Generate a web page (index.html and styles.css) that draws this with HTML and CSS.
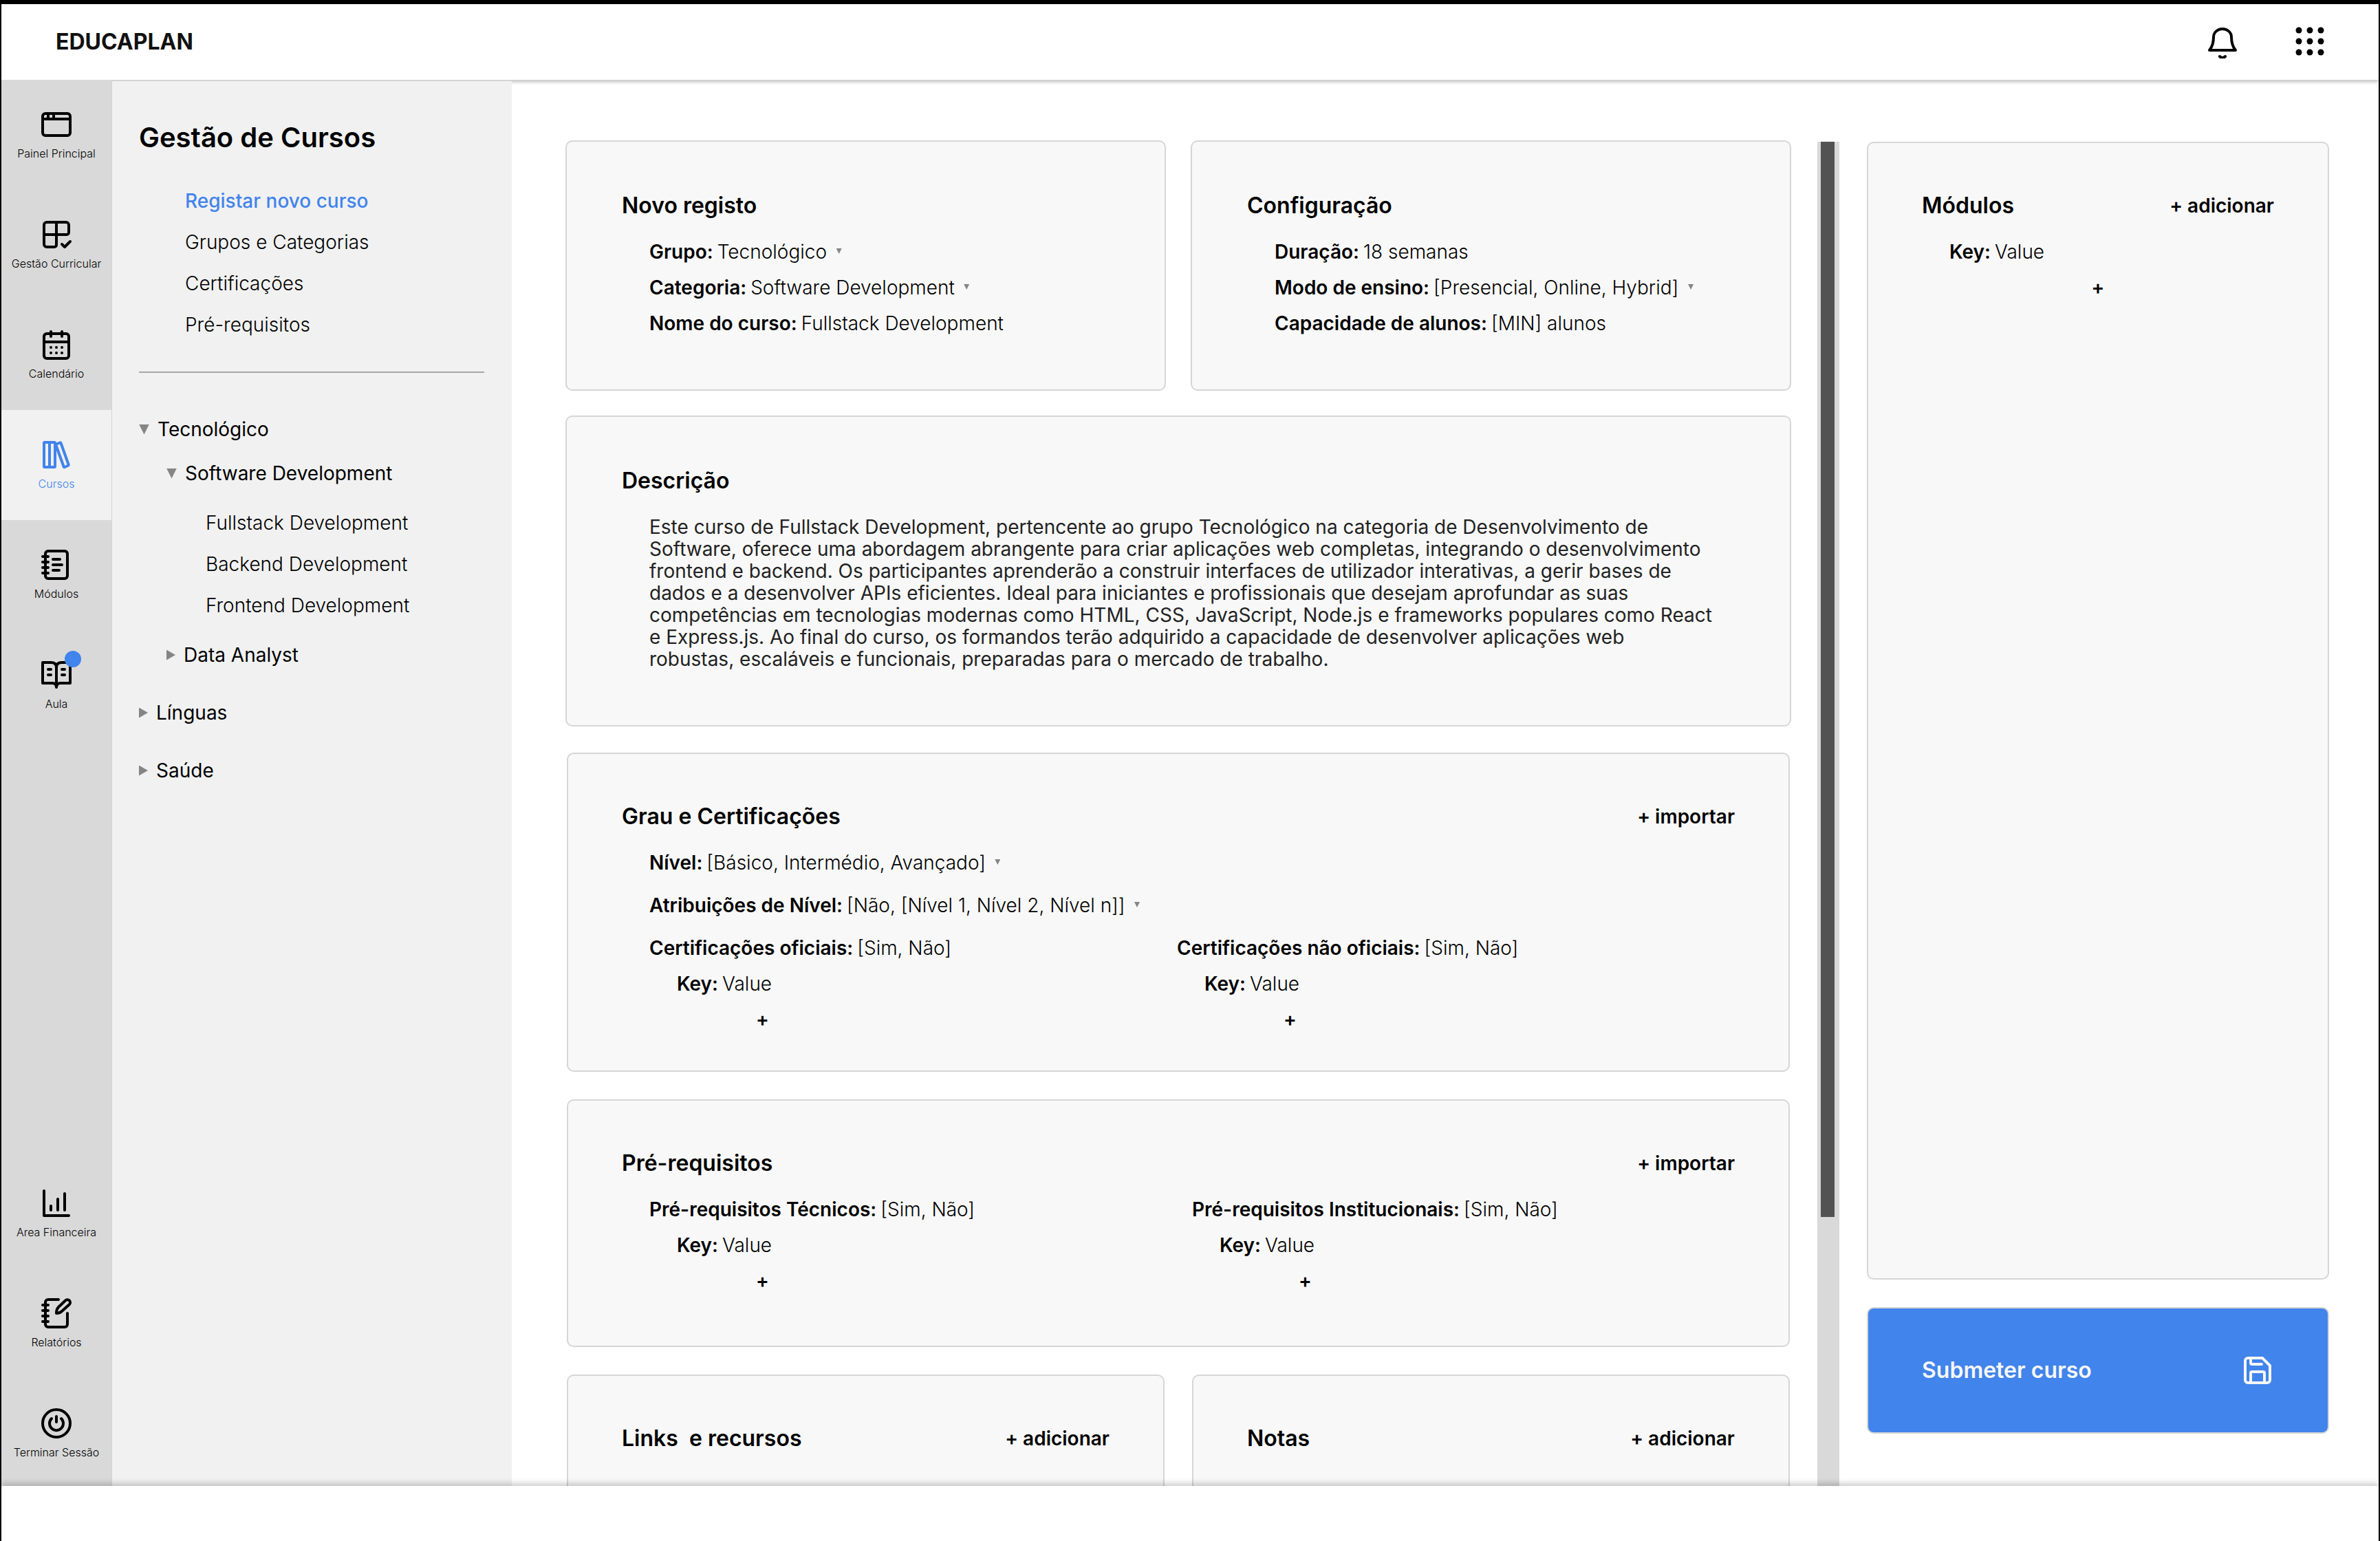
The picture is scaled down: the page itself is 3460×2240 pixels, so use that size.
FILE: index.html
```html
<!DOCTYPE html>
<html lang="pt">
<head>
<meta charset="utf-8">
<title>EDUCAPLAN – Gestão de Cursos</title>
<link rel="stylesheet" href="styles.css">
</head>
<body>
<header class="topbar">
  <h1 class="brand">EDUCAPLAN</h1>
  <div class="topbar-actions">
    <button class="icon-button" type="button" aria-label="Notificações">
      <svg class="icon" viewBox="-1 -2 48 48"><path d="M5 34C10 28 11 22 11 15C11 8 17 3 24 3S37 8 37 15C37 22 38 28 43 34Z"/><path d="M20 43q4 4 8 0"/></svg>
    </button>
    <button class="icon-button" type="button" aria-label="Aplicações">
      <svg class="icon icon-solid" viewBox="0 1 48 48"><circle cx="8" cy="8" r="4.5"/><circle cx="24" cy="8" r="4.5"/><circle cx="40" cy="8" r="4.5"/><circle cx="8" cy="24" r="4.5"/><circle cx="24" cy="24" r="4.5"/><circle cx="40" cy="24" r="4.5"/><circle cx="8" cy="40" r="4.5"/><circle cx="24" cy="40" r="4.5"/><circle cx="40" cy="40" r="4.5"/></svg>
    </button>
  </div>
</header>

<div class="workspace">
  <nav class="rail" aria-label="Principal">
    <div class="rail-group">
      <a class="rail-item" href="#">
        <svg class="icon" viewBox="0 0 48 48"><rect x="4" y="8" width="40" height="32" rx="4"/><path d="M4 16H44M12 8v8M20 8v8"/></svg>
        <span>Painel Principal</span>
      </a>
      <a class="rail-item" href="#">
        <svg class="icon" viewBox="0 0 48 48"><path d="M24 6V39a3 3 0 0 1-3 3H10a4 4 0 0 1-4-4V10a4 4 0 0 1 4-4H38a4 4 0 0 1 4 4V21a3 3 0 0 1-3 3H6"/><path d="M32 38l4 4 8-8"/></svg>
        <span>Gestão Curricular</span>
      </a>
      <a class="rail-item" href="#">
        <svg class="icon" viewBox="0 0 48 48"><rect x="6" y="8" width="36" height="36" rx="4"/><path d="M16 5v7M32 5v7M6 20H42M16 28h0M24 28h0M32 28h0M16 36h0M24 36h0M32 36h0"/></svg>
        <span>Calendário</span>
      </a>
      <a class="rail-item active" href="#" aria-current="page">
        <svg class="icon" viewBox="0 0 48 48"><rect x="6" y="6" width="8" height="36" rx="1"/><rect x="14" y="6" width="8" height="36" rx="1"/><path d="M23 9L29 6.500Q30 6 30.500 7L41.500 38Q42 39.500 40.500 40L36 42Q35 42.500 34.500 41Z"/></svg>
        <span>Cursos</span>
      </a>
      <a class="rail-item" href="#">
        <svg class="icon" viewBox="0 0 48 48"><rect x="8" y="4" width="32" height="40" rx="4"/><path d="M4 12h8M4 20h8M4 28h8M4 36h8M19 16H29M19 24H32M19 32H28"/></svg>
        <span>Módulos</span>
      </a>
      <a class="rail-item" href="#">
        <span class="icon-wrap">
          <svg class="icon" viewBox="0 0 48 48"><path d="M24 13C24 8 21 6 16 6H4V36H18C22 36 24 38 24 42C24 38 26 36 30 36H44V6H32C27 6 24 8 24 13V42M12 16h4M12 24h4M32 16h4M32 24h4"/></svg>
          <span class="badge"></span>
        </span>
        <span>Aula</span>
      </a>
    </div>
    <div class="rail-group rail-bottom">
      <a class="rail-item" href="#">
        <svg class="icon" viewBox="0 0 48 48"><path d="M6 6V42H42M16 28v6M26 18v16M36 10v24"/></svg>
        <span>Area Financeira</span>
      </a>
      <a class="rail-item" href="#">
        <svg class="icon" viewBox="0 0 48 48"><path d="M27 4H12a4 4 0 0 0-4 4V40a4 4 0 0 0 4 4H36a4 4 0 0 0 4-4V24M4 12h8M4 20h8M4 28h8M4 36h8"/><path d="M24 24C24 20 25 17 27 15L37 5.500A4 4 0 0 1 43 11L33 20C30 23 28 24 24 24Z"/></svg>
        <span>Relatórios</span>
      </a>
      <a class="rail-item" href="#">
        <svg class="icon" viewBox="0 0 48 48"><circle cx="24" cy="24" r="20"/><path d="M24 14v8M17 17a10 10 0 1 0 14 0"/></svg>
        <span>Terminar Sessão</span>
      </a>
    </div>
  </nav>

  <aside class="side">
    <h2 class="side-title">Gestão de Cursos</h2>
    <ul class="side-links">
      <li><a class="current" href="#">Registar novo curso</a></li>
      <li><a href="#">Grupos e Categorias</a></li>
      <li><a href="#">Certificações</a></li>
      <li><a href="#">Pré-requisitos</a></li>
    </ul>
    <hr class="side-rule">
    <div class="tree">
      <details open>
        <summary>Tecnológico</summary>
        <div class="branch">
          <details open>
            <summary>Software Development</summary>
            <ul class="leaves">
              <li><a href="#">Fullstack Development</a></li>
              <li><a href="#">Backend Development</a></li>
              <li><a href="#">Frontend Development</a></li>
            </ul>
          </details>
          <details>
            <summary>Data Analyst</summary>
          </details>
        </div>
      </details>
      <details>
        <summary>Línguas</summary>
      </details>
      <details>
        <summary>Saúde</summary>
      </details>
    </div>
  </aside>

  <main class="content">
    <div class="cards">
      <div class="stack">
        <div class="pair">
          <section class="card">
            <h3>Novo registo</h3>
            <div class="fields">
              <div class="field"><label for="grupo">Grupo:</label><span class="picker"><select id="grupo"><option>Tecnológico</option></select></span></div>
              <div class="field"><label for="categoria">Categoria:</label><span class="picker"><select id="categoria"><option>Software Development</option></select></span></div>
              <div class="field"><b>Nome do curso:</b><span>Fullstack Development</span></div>
            </div>
          </section>
          <section class="card">
            <h3>Configuração</h3>
            <div class="fields">
              <div class="field"><b>Duração:</b><span>18 semanas</span></div>
              <div class="field"><label for="modo">Modo de ensino:</label><span class="picker"><select id="modo"><option>[Presencial, Online, Hybrid]</option></select></span></div>
              <div class="field"><b>Capacidade de alunos:</b><span>[MIN] alunos</span></div>
            </div>
          </section>
        </div>
        <section class="card">
          <h3>Descrição</h3>
          <p class="description">Este curso de Fullstack Development, pertencente ao grupo Tecnológico na categoria de Desenvolvimento de Software, oferece uma abordagem abrangente para criar aplicações web completas, integrando o desenvolvimento frontend e backend. Os participantes aprenderão a construir interfaces de utilizador interativas, a gerir bases de dados e a desenvolver APIs eficientes. Ideal para iniciantes e profissionais que desejam aprofundar as suas competências em tecnologias modernas como HTML, CSS, JavaScript, Node.js e frameworks populares como React e Express.js. Ao final do curso, os formandos terão adquirido a capacidade de desenvolver aplicações web <br>robustas, escaláveis e funcionais, preparadas para o mercado de trabalho.</p>
        </section>
      </div>

      <div class="stack stack-inset">
        <section class="card card-short">
          <div class="card-head"><h3>Grau e Certificações</h3><button class="link-button" type="button">+ importar</button></div>
          <div class="fields fields-loose">
            <div class="field"><label for="nivel">Nível:</label><span class="picker"><select id="nivel"><option>[Básico, Intermédio, Avançado]</option></select></span></div>
            <div class="field"><label for="atrib">Atribuições de Nível:</label><span class="picker"><select id="atrib"><option>[Não, [Nível 1, Nível 2, Nível n]]</option></select></span></div>
            <div class="columns columns-inset">
              <div>
                <div class="field"><b>Certificações oficiais:</b><span>[Sim, Não]</span></div>
                <div class="entries">
                  <div class="field"><b>Key:</b><span>Value</span></div>
                  <button class="add" type="button">+</button>
                </div>
              </div>
              <div>
                <div class="field"><b>Certificações não oficiais:</b><span>[Sim, Não]</span></div>
                <div class="entries">
                  <div class="field"><b>Key:</b><span>Value</span></div>
                  <button class="add" type="button">+</button>
                </div>
              </div>
            </div>
          </div>
        </section>

        <section class="card">
          <div class="card-head"><h3>Pré-requisitos</h3><button class="link-button" type="button">+ importar</button></div>
          <div class="fields">
            <div class="columns">
              <div>
                <div class="field"><b>Pré-requisitos Técnicos:</b><span>[Sim, Não]</span></div>
                <div class="entries">
                  <div class="field"><b>Key:</b><span>Value</span></div>
                  <button class="add" type="button">+</button>
                </div>
              </div>
              <div>
                <div class="field"><b>Pré-requisitos Institucionais:</b><span>[Sim, Não]</span></div>
                <div class="entries">
                  <div class="field"><b>Key:</b><span>Value</span></div>
                  <button class="add" type="button">+</button>
                </div>
              </div>
            </div>
          </div>
        </section>

        <div class="pair pair-wide">
          <section class="card">
            <div class="card-head"><h3>Links  e recursos</h3><button class="link-button" type="button">+ adicionar</button></div>
          </section>
          <section class="card">
            <div class="card-head"><h3>Notas</h3><button class="link-button" type="button">+ adicionar</button></div>
          </section>
        </div>
      </div>
    </div>

    <div class="scroll-track"><div class="scroll-thumb"></div></div>

    <div class="summary">
      <section class="card card-modules">
        <div class="card-head"><h3>Módulos</h3><button class="link-button" type="button">+ adicionar</button></div>
        <div class="fields">
          <div class="field"><b>Key:</b><span>Value</span></div>
        </div>
        <button class="add add-centered" type="button">+</button>
      </section>
      <button class="submit" type="submit">
        <span>Submeter curso</span>
        <svg class="icon" viewBox="0 0 48 48"><path d="M10 6H31L42 17V38a4 4 0 0 1-4 4H10a4 4 0 0 1-4-4V10a4 4 0 0 1 4-4Z"/><path d="M14 6V13a2 2 0 0 0 2 2H30M14 42V28a2 2 0 0 1 2-2H32a2 2 0 0 1 2 2V42"/></svg>
      </button>
    </div>
  </main>
</div>

<footer class="bottombar"></footer>
</body>
</html>
```

FILE: styles.css
```css
* {
  box-sizing: border-box;
}

body {
  margin: 0;
  height: 100vh;
  display: flex;
  flex-direction: column;
  border: 2px solid #000;
  border-width: 6px 2px 0;
  background: #fff;
  color: #000;
  font-family: Inter, "Liberation Sans", sans-serif;
  font-size: 28px;
  font-weight: 300;
  line-height: 52px;
}

h1, h2, h3, p, ul {
  margin: 0;
  padding: 0;
}

ul {
  list-style: none;
}

a {
  color: inherit;
  text-decoration: none;
}

button, select {
  margin: 0;
  padding: 0;
  border: 0;
  background: none;
  color: inherit;
  font: inherit;
  appearance: none;
  cursor: pointer;
}

b, label {
  font-weight: 600;
}

.icon {
  display: block;
  width: 48px;
  height: 48px;
  fill: none;
  stroke: currentColor;
  stroke-width: 4;
  stroke-linecap: round;
  stroke-linejoin: round;
}

.icon-solid {
  fill: currentColor;
  stroke: none;
}

/* Top bar */
.topbar {
  flex: none;
  height: 110px;
  padding: 0 76px 0 79px;
  display: flex;
  align-items: center;
  justify-content: space-between;
  background: #fff;
  box-shadow: 0 4px 4px rgba(0, 0, 0, 0.2);
  z-index: 1;
}

.brand {
  font-size: 32px;
  font-weight: 700;
  color: #111;
}

.topbar-actions {
  display: flex;
  gap: 80px;
}

/* Workspace */
.workspace {
  flex: 1;
  min-height: 0;
  display: flex;
}

.rail {
  flex: none;
  width: 160px;
  display: flex;
  flex-direction: column;
  justify-content: space-between;
  background: #d9d9d9;
  z-index: 2;
}

.rail-bottom {
  margin-bottom: -4px;
}

.rail-item {
  height: 160px;
  padding-top: 41px;
  display: flex;
  flex-direction: column;
  align-items: center;
  gap: 8px;
  font-size: 16px;
  line-height: 20px;
}

.rail-item.active {
  background: #f1f1f1;
  color: #4184eb;
}

.icon-wrap {
  position: relative;
}

.badge {
  position: absolute;
  top: -11px;
  right: -12px;
  width: 24px;
  height: 24px;
  border-radius: 50%;
  background: #4184eb;
}

.side {
  flex: none;
  width: 582px;
  padding: 58px 40px 0 39px;
  border-top: 2px solid #d4d4d4;
  border-left: 1px solid #d4d4d4;
  background: #f1f1f1;
  z-index: 2;
}

.side-title {
  font-size: 40px;
  font-weight: 600;
  line-height: 48px;
}

.side-links {
  margin-top: 38px;
  padding-left: 67px;
  line-height: 60px;
}

.side-links .current {
  color: #4184eb;
  font-weight: 500;
}

.side-rule {
  height: 2px;
  margin: 38px 0 50px;
  border: 0;
  background: #a6a6a6;
}

.tree {
  display: flex;
  flex-direction: column;
  gap: 20px;
}

.tree summary {
  display: flex;
  align-items: center;
  gap: 12px;
  line-height: 64px;
  font-weight: 400;
  cursor: pointer;
}

.tree summary::before {
  content: "";
  width: 13px;
  height: 15px;
  background: #858585;
  clip-path: polygon(0 0, 100% 50%, 0 100%);
}

.tree details[open] > summary::before {
  width: 15px;
  clip-path: polygon(0 0, 100% 0, 50% 100%);
}

.branch {
  padding-left: 40px;
}

.leaves {
  padding: 10px 0 10px 57px;
  line-height: 60px;
}

/* Main content */
.content {
  flex: 1;
  min-width: 0;
  display: flex;
  padding: 88px 72px 0 78px;
  overflow: hidden;
}

.cards {
  flex: 1;
  min-width: 0;
  margin-right: 38px;
  display: flex;
  flex-direction: column;
  gap: 38px;
  overflow: hidden;
}

.stack {
  flex: none;
  display: flex;
  flex-direction: column;
  gap: 36px;
}

.stack-inset {
  padding: 0 2px;
  gap: 40px;
}

.pair {
  display: grid;
  grid-template-columns: 1fr 1fr;
  gap: 36px;
}

.pair-wide {
  gap: 40px;
}

.card {
  padding: 73px 80px 70px;
  border: 2px solid #d6d6d6;
  border-radius: 10px;
  background: #f8f8f8;
}

.stack-inset .card {
  padding: 71px 78px 68px;
}

.stack-inset .card-short {
  padding-bottom: 48px;
}

.card h3 {
  font-size: 32px;
  font-weight: 600;
  line-height: 40px;
  white-space: pre;
}

.card-head {
  display: flex;
  align-items: center;
  justify-content: space-between;
}

.link-button {
  font-weight: 600;
  line-height: 40px;
}

.fields {
  margin-top: 21px;
  padding-left: 40px;
}

.fields-loose {
  display: flex;
  flex-direction: column;
  gap: 10px;
}

.field {
  display: flex;
  gap: 6px;
  white-space: nowrap;
}

.picker {
  display: flex;
  align-items: center;
  gap: 13px;
}

.picker::after {
  content: "";
  width: 8px;
  height: 8px;
  margin-bottom: 2px;
  background: #858585;
  clip-path: polygon(0 0, 100% 0, 50% 100%);
}

.description {
  padding: 31px 28px 10px 40px;
  color: #222;
  font-weight: 400;
  line-height: 32px;
}

.columns {
  display: grid;
  grid-template-columns: 1fr 1fr;
}

.columns-inset {
  padding-right: 44px;
}

.entries {
  padding-left: 40px;
}

.add {
  display: block;
  margin-left: 115px;
  font-weight: 600;
  line-height: 52px;
}

.add-centered {
  margin: 0 auto;
}

/* Scroll bar */
.scroll-track {
  flex: none;
  width: 32px;
  margin-top: 2px;
  padding: 0 7px 0 5px;
  background: #d9d9d9;
}

.scroll-thumb {
  height: 80%;
  background: #525252;
}

/* Right column */
.summary {
  flex: none;
  width: 672px;
  margin: 2px 0 76px 40px;
  display: flex;
  flex-direction: column;
  gap: 40px;
}

.card-modules {
  flex: 1;
  padding: 71px 78px;
}

.submit {
  flex: none;
  height: 184px;
  padding: 0 78px;
  display: flex;
  align-items: center;
  justify-content: space-between;
  border: 2px solid #d6d6d6;
  border-radius: 10px;
  background: #4184eb;
  color: #f7f7f7;
  font-size: 32px;
  font-weight: 600;
}

/* The cards row that runs below the fold */
.pair-wide .card {
  min-height: 364px;
}

/* Bottom bar */
.bottombar {
  flex: none;
  height: 80px;
  background: #fff;
  box-shadow: 0 -4px 8px rgba(0, 0, 0, 0.2);
  z-index: 3;
}
```
